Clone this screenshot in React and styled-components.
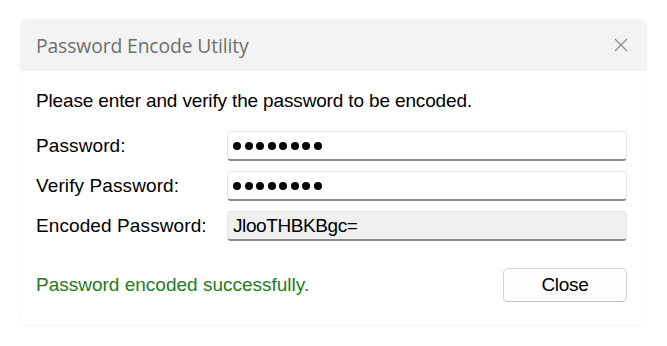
import styled, { createGlobalStyle } from "styled-components";

const GlobalStyle = createGlobalStyle`
    html, body {
        margin: 0;
        padding: 0;
        background: #ffffff;
    }
`

const Page = styled.div`
    width: 667px;
    height: 346px;
    padding: 19px 20px 0 20px;
    box-sizing: border-box;
`

const Window = styled.div`
    width: 627px;
    height: 306px;
    border-radius: 8px;
    overflow: hidden;
    background: #ffffff;
    box-shadow: 0 1px 2px rgba(0,0,0,0.05);
    display: flex;
    flex-direction: column;
`

const TitleBar = styled.div`
    height: 52px;
    background: #f3f3f3;
    display: flex;
    align-items: center;
    justify-content: space-between;
    padding: 0 19px 0 16px;
    flex-shrink: 0;
`

const TitleText = styled.div`
    font-family: "Open Sans", "Noto Sans", sans-serif;
    font-size: 19.3px;
    color: #6f6f6f;
    letter-spacing: -0.1px;
`

const CloseIcon = styled.svg`
    width: 14px;
    height: 14px;
`

const Body = styled.div`
    flex: 1;
    padding: 20px 20px 0 16px;
    display: flex;
    flex-direction: column;
    font-family: "Liberation Sans", Arial, sans-serif;
    font-size: 19px;
    color: #000000;
`

const Intro = styled.div`
    height: 20px;
    line-height: 20px;
    letter-spacing: -0.15px;
    margin-bottom: 20px;
`

const Form = styled.div`
    display: grid;
    grid-template-columns: 191px 1fr;
    row-gap: 10px;
    align-items: center;
`

const Label = styled.div`
    letter-spacing: 0.1px;
`

const Field = styled.div`
    height: 30px;
    box-sizing: border-box;
    border: 1px solid #e6e6e6;
    border-bottom: 2px solid #8c8c8c;
    border-radius: 4px;
    background: ${(props) => (props.readOnly ? "#f0f0f0" : "#ffffff")};
    display: flex;
    align-items: center;
    padding: 0 5px;
    letter-spacing: ${(props) => (props.readOnly ? "-0.4px" : "0")};
`

const Dots = styled.span`
    display: flex;
    gap: 3.5px;
`

const Dot = styled.span`
    width: 8px;
    height: 8px;
    border-radius: 50%;
    background: #000000;
`

const Footer = styled.div`
    display: flex;
    align-items: center;
    justify-content: space-between;
    margin-top: 27px;
`

const Status = styled.div`
    color: #1f7a1f;
    letter-spacing: 0;
`

const Button = styled.button`
    width: 124px;
    height: 34px;
    border: 1px solid #d3d3d3;
    border-bottom-color: #bdbdbd;
    border-radius: 5px;
    background: #fdfdfd;
    font-family: "Liberation Sans", Arial, sans-serif;
    font-size: 19px;
    color: #000000;
    letter-spacing: -0.3px;
    padding: 0;
`

function Masked({ count }) {
    return (
        <Dots>
            {Array.from({ length: count }).map((_, i) => (
                <Dot key={i} />
            ))}
        </Dots>
    )
}

export default function App() {
    return (
        <>
            <GlobalStyle />
            <Page>
                <Window>
                    <TitleBar>
                        <TitleText>Password Encode Utility</TitleText>
                        <CloseIcon viewBox="0 0 14 14">
                            <path d="M1 1 L13 13 M13 1 L1 13" stroke="#8a8a8a" strokeWidth="1.1" fill="none" />
                        </CloseIcon>
                    </TitleBar>
                    <Body>
                        <Intro>Please enter and verify the password to be encoded.</Intro>
                        <Form>
                            <Label>Password:</Label>
                            <Field><Masked count={8} /></Field>
                            <Label>Verify Password:</Label>
                            <Field><Masked count={8} /></Field>
                            <Label>Encoded Password:</Label>
                            <Field readOnly>JlooTHBKBgc=</Field>
                        </Form>
                        <Footer>
                            <Status>Password encoded successfully.</Status>
                            <Button>Close</Button>
                        </Footer>
                    </Body>
                </Window>
            </Page>
        </>
    )
}
